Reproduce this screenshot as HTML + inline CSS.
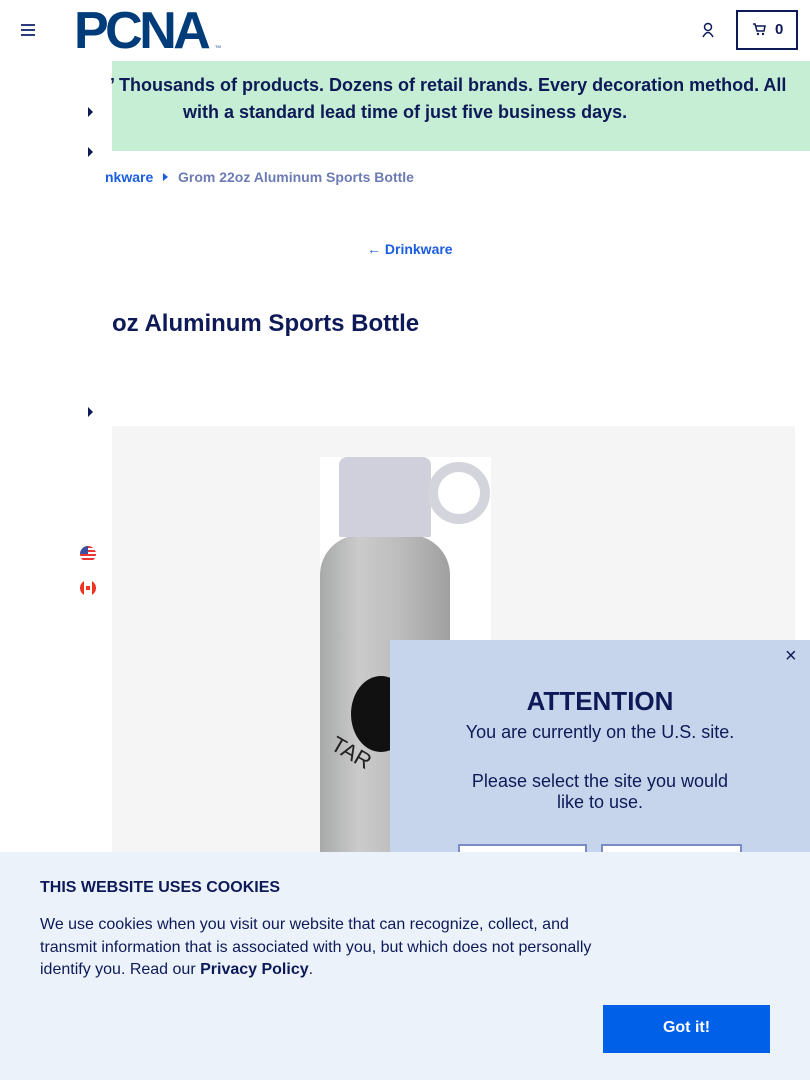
<!DOCTYPE html>
<html><head><meta charset="utf-8"><style>
*{margin:0;padding:0;box-sizing:border-box}
body{width:810px;height:1080px;overflow:hidden;position:relative;background:#fff;font-family:"Liberation Sans",Arial,sans-serif;color:#0e1a57}
.a{position:absolute}
.tri{width:0;height:0;border-top:5px solid transparent;border-bottom:5px solid transparent;border-left:5px solid #0e1a57}
</style></head><body>
<div class="a" style="left:21px;top:24px;width:14px;height:2px;background:#2a3a7a;box-shadow:0 5px 0 #2a3a7a,0 10px 0 #2a3a7a"></div>
<div class="a" style="left:74px;top:5px;font:900 52px/1 'Liberation Sans',sans-serif;color:#003b7a;letter-spacing:-3.5px;white-space:nowrap">PCNA</div>
<div class="a" style="left:215px;top:44px;font-size:4px;color:#003b7a">TM</div>
<svg class="a" style="left:701px;top:22px" width="14" height="16" viewBox="0 0 14 16"><circle cx="7" cy="5" r="3.5" fill="none" stroke="#0e1a57" stroke-width="1.5"/><path d="M2 15 Q7 6 12 15" fill="none" stroke="#0e1a57" stroke-width="1.5"/></svg>
<div class="a" style="left:736px;top:10px;width:62px;height:40px;border:2px solid #0e1a57"></div>
<svg class="a" style="left:752px;top:23px" width="14" height="13" viewBox="0 0 14 13"><path d="M1 1h2l2 7h7l1-5H4" fill="none" stroke="#0e1a57" stroke-width="1.5"/><circle cx="6" cy="11" r="1.2" fill="#0e1a57"/><circle cx="11" cy="11" r="1.2" fill="#0e1a57"/></svg>
<div class="a" style="left:775px;top:21px;font-weight:700;font-size:15px">0</div>
<div class="a" style="left:112px;top:61px;width:698px;height:90px;background:#c5eed5"></div>
<div class="a" style="left:110px;top:74px;white-space:nowrap;font-weight:700;font-size:18px;line-height:22px">’ Thousands of products. Dozens of retail brands. Every decoration method. All</div>
<div class="a" style="left:183px;top:101px;white-space:nowrap;font-weight:700;font-size:18px;line-height:22px">with a standard lead time of just five business days.</div>
<div class="a tri" style="left:88px;top:107px"></div>
<div class="a tri" style="left:88px;top:147px"></div>
<div class="a" style="left:105px;top:169px;font-weight:700;font-size:14px;color:#1a5de0">nkware</div>
<div class="a tri" style="left:163px;top:173px;border-top-width:4px;border-bottom-width:4px;border-left:5px solid #1a5de0"></div>
<div class="a" style="left:178px;top:169px;font-weight:700;font-size:14px;color:#6c7bb3">Grom 22oz Aluminum Sports Bottle</div>
<div class="a" style="left:367px;top:241px;font-weight:700;font-size:14px;color:#1a5de0">← Drinkware</div>
<div class="a" style="left:112px;top:310px;font-weight:700;font-size:24px">oz Aluminum Sports Bottle</div>
<div class="a tri" style="left:88px;top:407px"></div>
<div class="a" style="left:112px;top:426px;width:683px;height:430px;background:#f5f5f5"></div>
<div class="a" style="left:320px;top:457px;width:171px;height:400px;background:#fff"></div>
<div class="a" style="left:320px;top:535px;width:130px;height:320px;background:linear-gradient(90deg,#a8a9a9,#cbcbcb 30%,#bdbdbd 60%,#a0a0a0);border-radius:40px 40px 0 0"></div>
<div class="a" style="left:339px;top:457px;width:92px;height:80px;background:#cfd0dc;border-radius:8px 8px 2px 2px"></div>
<div class="a" style="left:428px;top:462px;width:62px;height:62px;border:10px solid #d3d4dc;border-radius:50%"></div>
<div class="a" style="left:351px;top:676px;width:60px;height:76px;border-radius:50%;background:#111"></div>
<div class="a" style="left:330px;top:740px;font-size:22px;color:#222;transform:rotate(30deg)">TAR</div>
<div class="a" style="left:80px;top:546px;width:16px;height:16px;border-radius:50%;background:repeating-linear-gradient(#e33 0 2px,#fff 2px 4px)"></div>
<div class="a" style="left:80px;top:546px;width:8px;height:8px;background:#3a4fa0;border-radius:8px 0 0 0"></div>
<div class="a" style="left:80px;top:580px;width:16px;height:16px;border-radius:50%;background:linear-gradient(90deg,#e32 0 4px,#fff 4px 12px,#e32 12px)"></div>
<div class="a" style="left:86px;top:586px;width:4px;height:4px;background:#e32"></div>
<div class="a" style="left:390px;top:640px;width:420px;height:220px;background:#c6d5eb"></div>
<div class="a" style="left:785px;top:645px;font-size:20px;color:#0e1a57">×</div>
<div class="a" style="left:390px;top:686px;width:420px;text-align:center;font-weight:700;font-size:26px">ATTENTION</div>
<div class="a" style="left:390px;top:722px;width:420px;text-align:center;font-size:18px;line-height:21px">You are currently on the U.S. site.</div>
<div class="a" style="left:390px;top:771px;width:420px;text-align:center;font-size:18px;line-height:21px">Please select the site you would<br>like to use.</div>
<div class="a" style="left:458px;top:844px;width:129px;height:20px;border:2px solid #7a8cc4;background:#fff"></div>
<div class="a" style="left:601px;top:844px;width:141px;height:20px;border:2px solid #7a8cc4;background:#fff"></div>
<div class="a" style="left:0;top:852px;width:810px;height:228px;background:#ebf2fa"></div>
<div class="a" style="left:40px;top:879px;font-weight:700;font-size:16px">THIS WEBSITE USES COOKIES</div>
<div class="a" style="left:40px;top:914px;width:570px;font-size:16px;line-height:22.5px">We use cookies when you visit our website that can recognize, collect, and transmit information that is associated with you, but which does not personally identify you. Read our <b>Privacy Policy</b>.</div>
<div class="a" style="left:603px;top:1005px;width:167px;height:48px;background:#0060e8;color:#fff;font-weight:700;font-size:16px;text-align:center;line-height:46px">Got it!</div>
</body></html>
